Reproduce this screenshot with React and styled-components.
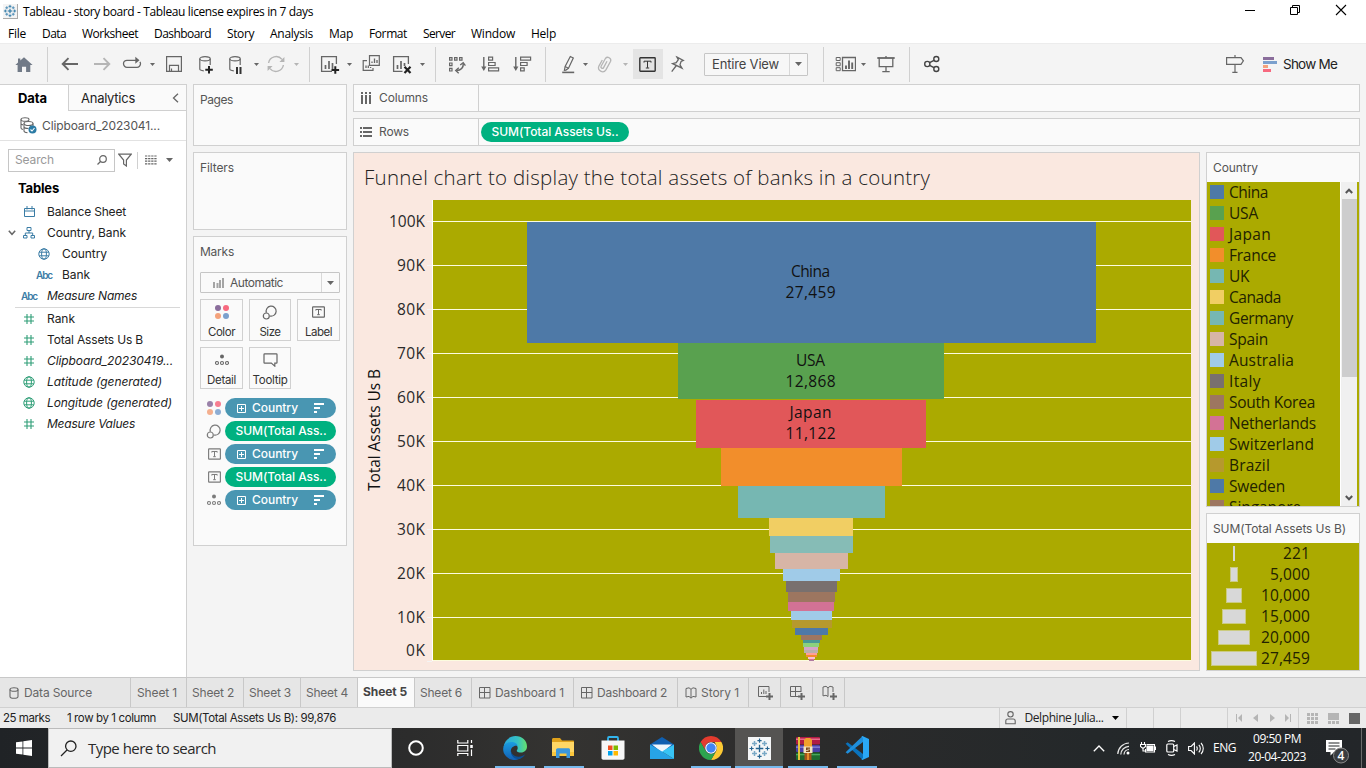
import React, { useLayoutEffect, useRef, useState } from "react";
import styled, { createGlobalStyle, css } from "styled-components";

const ui = `Inter, "Liberation Sans", sans-serif`;
const sys = `"Open Sans", "Noto Sans", sans-serif`;

const Global = createGlobalStyle`
  *, *::before, *::after { box-sizing: border-box; }
  html, body { margin: 0; padding: 0; }
  body { width: 1366px; height: 768px; overflow: hidden; background: #f4f4f4; font-family: ${ui}; font-size: 12px; color: #333; }
  svg { display: block; flex: none; }
`;

/* ---------- text ---------- */
const Text = styled.span`
  display: inline-block;
  flex: none;
  white-space: nowrap;
  font-family: ${(p) => (p.$sys ? sys : ui)};
  font-size: ${(p) => p.$size || 12}px;
  font-weight: ${(p) => p.$weight || 400};
  font-style: ${(p) => (p.$italic ? "italic" : "normal")};
  color: ${(p) => p.$color || "inherit"};
  line-height: ${(p) => p.$lh || 16}px;
`;

/* A label whose tracking is adjusted so that it takes the given width. */
function Label({ w, children, ...rest }) {
  const ref = useRef(null);
  const [tracking, setTracking] = useState(0);
  useLayoutEffect(() => {
    const range = document.createRange();
    range.selectNodeContents(ref.current);
    const natural = range.getBoundingClientRect().width;
    setTracking((w - natural) / String(children).length);
  }, [w, children]);
  return (
    <Text ref={ref} style={{ letterSpacing: `${tracking}px` }} {...rest}>
      {children}
    </Text>
  );
}

/* ---------- icons ---------- */
const Svg = ({ w = 20, h = 20, s = "#666", sw = 1, f = "none", children }) => (
  <svg width={w} height={h} viewBox={`0 0 ${w} ${h}`} fill={f} stroke={s} strokeWidth={sw}>{children}</svg>
);

const Caret = ({ c = "#666", w = 5, h = 3 }) => (
  <svg width={w} height={h} viewBox={`0 0 ${w} ${h}`}><path d={`M0 0H${w}L${w / 2} ${h}Z`} fill={c} /></svg>
);

const TableauMark = ({ size, c = "#1f6f9f", soft = "#4f8fb8" }) => (
  <svg width={size} height={size} viewBox="0 0 24 24" stroke={c} fill="none">
    <path d="M12 8v8M8 12h8" strokeWidth="1.8" />
    <path d="M12 1.5v5M9.5 4h5M12 17.5v5M9.5 20h5M1.5 12h5M4 9.5v5M17.5 12h5M20 9.5v5" strokeWidth="1.4" />
    <path stroke={soft} d="M6.5 4v5M4 6.5h5M17.5 4v5M15 6.5h5M6.5 15v5M4 17.5h5M17.5 15v5M15 17.5h5" strokeWidth="1.7" />
  </svg>
);

const Home = () => (
  <Svg s="none"><path fill="#717a87" d="M10 3.3 18.6 11h-2.3v7h-4.2v-5.2H8V18H3.6v-7H1.4L4 8.6V4.4h2.3v2.2z" /></Svg>
);
const Arrow = ({ c, flip }) => (
  <Svg s={c} sw="1.9"><path d={flip ? "M2 10h15M11.5 4.2 17.3 10l-5.8 5.8" : "M18 10H3M8.5 4.2 2.7 10l5.8 5.8"} /></Svg>
);
const Redo = () => (
  <Svg sw="1.3"><path d="M14 6.3H5a3.5 3.5 0 0 0 0 7h10a3.5 3.5 0 0 0 3.5-3.5c0-.9-.2-1.500-.6-2" /><path fill="#666" stroke="none" d="M13.300 2.800 17.500 6.300l-4.200 3.500z" /></Svg>
);
const Save = () => (
  <Svg sw="1.2"><path d="M2.600 2.600h14.800v14.800H2.600zM5.500 17.400v-6h9v6M7.500 17.400v-3" /></Svg>
);
const Cylinder = ({ children }) => (
  <Svg sw="1.2"><ellipse cx="9" cy="4.700" rx="5.200" ry="2.100" /><path d="M3.800 4.700v10.400c0 .8 1.500 1.600 4 1.800M14.200 4.700V11" />{children}</Svg>
);
const DbPlus = () => <Cylinder><path stroke="#222" strokeWidth="2" d="M13 12v7.500M9.300 15.800h7.500" /></Cylinder>;
const DbPause = () => <Cylinder><path stroke="#333" strokeWidth="2" d="M11 13v7M14.500 13v7" /></Cylinder>;
const Refresh = () => (
  <Svg s="#b5b5b5" sw="1.4"><path d="M2.600 9A7.600 7.600 0 0 1 16 5.400M17.400 11A7.600 7.600 0 0 1 4 14.600" /><path fill="#b5b5b5" stroke="none" d="M18.400 3v5h-5zM1.600 17v-5h5z" /></Svg>
);
const NewSheet = () => (
  <Svg sw="1.3"><path d="M12 17.400H1.600V2.600h14.800V10" /><path strokeWidth="1.700" d="M5.500 11v4M9 7v8M12.500 9v6" /><path stroke="#222" strokeWidth="2" d="M15.300 12.300v7.400M11.500 16h7.600" /></Svg>
);
const Duplicate = () => (
  <Svg sw="1.2"><path d="M8.500 1.600h9.800v9.800H8.500zM6 6.600H2.200v9.800H12V14" /><path strokeWidth="1.300" d="M11 9V7.500M13.500 9V4.500M16 9V6M5 14v-2.500M7.300 14v-2.500M9.600 14v-1" /></Svg>
);
const ClearSheet = () => (
  <Svg sw="1.3"><path d="M10.500 17.400H1.600V2.600h14.800V10" /><path strokeWidth="1.700" d="M5.500 11v4M9 7v8M12.500 9v3" /><path stroke="#222" strokeWidth="2.200" d="m12.500 12.800 6 6.200M18.500 12.800l-6 6.200" /></Svg>
);
const Swap = () => (
  <Svg sw="1.2"><path d="M2.600 3.600H5v2.600H2.600zM7.600 3.600H10v2.600H7.600zM12.600 3.600H15v2.600h-2.400zM2.600 9H5v2.600H2.600zM2.600 14.400H5V17H2.600z" /><path strokeWidth="1.500" d="M16.300 9.500c.2 4-2.300 6.800-6.800 7" /><path strokeWidth="1.300" d="m13.200 11 3-2.300 2.200 3M11.800 13.800 8.700 16.600l3 2.600" /></Svg>
);
const Sort = ({ desc }) => (
  <Svg sw="1.2"><path strokeWidth="1.400" d="M3.800 3v12" /><path fill="#666" stroke="none" d="M1.200 12.600h5.200L3.800 17z" />
    <path d={desc ? "M8.600 3.100h10v3h-10zM8.600 8.500h6.500v3H8.600zM8.600 13.800h3.600v3H8.600z" : "M8.600 3.100h4v3h-4zM8.600 8.500h6.500v3H8.600zM8.600 13.800h10v3h-10z"} />
  </Svg>
);
const Highlighter = () => (
  <Svg sw="1.2"><path d="m12.300 2.500 3 1.500-4.800 10.300-3.400-1.700zM7.100 12.600l-.7 3.700 1.500-.2 2.600-1.800" /><path strokeWidth="1.600" d="M4.200 18.400h12" /></Svg>
);
const Clip = () => (
  <Svg s="#b5b5b5" sw="1.3"><path d="M12 7.300 8.600 13.600a1.400 1.400 0 0 1-2.500-1.400L10.400 4.500a3 3 0 0 1 5.200 2.800l-4.700 8.600a4 4 0 0 1-7-3.800L7.300 6" /></Svg>
);
const BoxT = ({ w = 17, h = 15, s = "#666", sw = 1.4, fs = 1 }) => (
  <svg width={w} height={h} viewBox="0 0 17 15" fill="none" stroke={s} strokeWidth={sw}>
    <rect x=".8" y=".8" width="15.400" height="13.400" rx=".6" /><path strokeWidth={fs} d="M5 5.600V4.200h7v1.400M8.500 4.200v6.600M6.800 11h3.400" />
  </svg>
);
const Pin = () => (
  <Svg sw="1.3"><path d="m10 3.200 6.300 3.200-2.200 1L13 10.800l2 3.400-9.400-4.600 3.600-1L11.300 5.600zM9 12l-4.300 5.600" /></Svg>
);
const Cards = () => (
  <Svg w={21} sw="1.3"><path strokeWidth="1" d="M1.200 3.500h4v3h-4zM1.200 8.700h4v3h-4zM1.200 13.700h4v3h-4z" /><path d="M7.500 3.500h13v13.200h-13z" /><path strokeWidth="1.900" d="M11 11.500V15M14 6.500V15M17.200 8.500V15" /></Svg>
);
const Presentation = () => (
  <Svg sw="1.3"><path strokeWidth="1.800" d="M1.300 4h17.400" /><path d="M3.200 4v8.600h13.600V4M10 2v2M10 12.600v5M6.300 17.700h7.400" /></Svg>
);
const Share = () => (
  <Svg s="#444" sw="1.4"><circle cx="5.300" cy="10" r="2.600" /><circle cx="14.300" cy="5" r="2.500" /><circle cx="14.300" cy="15" r="2.500" /><path d="m7.600 8.700 4.400-2.400M7.600 11.300l4.400 2.400" /></Svg>
);
const Signpost = () => (
  <Svg sw="1.2"><path d="M1.600 3.600H16l2.400 3.200L16 10.400H1.600zM10 1v2.600M10 10.400v8M7.300 18.300h5.200" /></Svg>
);
const ShowMeIcon = () => (
  <svg width="14" height="16"><path fill="#8a6d9b" d="M0 1h11v3H0z" /><path fill="#7ba0cd" d="M0 5h14v3H0z" /><path fill="#f4a27c" d="M0 9h5v3H0z" /><path fill="#f7697f" d="M0 13h8v3H0z" /></svg>
);

const ColorDots = () => (
  <svg width="14" height="14"><circle cx="3" cy="3" r="3" fill="#8a6d9b" /><circle cx="11" cy="3" r="3" fill="#f7697f" /><circle cx="3" cy="11" r="3" fill="#f4a27c" /><circle cx="11" cy="11" r="3" fill="#7ba0cd" /></svg>
);
const SizeIcon = () => (
  <Svg w={16} h={15} sw="1.2"><path d="M4.400 7.700A5 5 0 1 1 8 11" /><circle cx="4.300" cy="11" r="3" /></Svg>
);
const DetailIcon = () => (
  <Svg w={14} h={12} sw="1.1"><circle cx="7" cy="2.500" r="2" fill="#666" stroke="none" /><circle cx="2" cy="9" r="1.500" /><circle cx="7" cy="9" r="1.500" /><circle cx="12" cy="9" r="1.500" /></Svg>
);
const TooltipIcon = () => (
  <Svg w={15} h={14} sw="1.2"><path d="M1.600.9h11.800c.4 0 .6.2.6.6v8c0 .4-.2.6-.6.6h-1.600v3L8.300 10.100H1.600C1.200 10.100 1 9.900 1 9.500v-8c0-.4.2-.6.6-.6z" /></Svg>
);
const Plus = () => (
  <Svg w={9} h={9} s="#fff"><path d="M.5.5h8v8h-8zM4.500 2v5M2 4.500h5" /></Svg>
);
const SortPill = () => (
  <svg width="10" height="10"><path fill="#fff" d="M0 0h10v2H0zM0 4h6v2H0zM0 8h3v2H0z" /></svg>
);
const Calendar = () => <Svg w={11} h={11} s="#3a7ca5"><path d="M.5 2.500h10v8H.5zM.5 5h10M3 0v3.500M8 0v3.500" /></Svg>;
const Hierarchy = () => <Svg w={12} h={12} s="#3a7ca5"><path d="M4 .5h4v3H4zM.5 8.500h3.500v2.500H.5zM8 8.500h3.500v2.500H8zM6 3.500V6M2.300 8.500V6h7.400v2.500" /></Svg>;
const Globe = ({ c }) => (
  <Svg w={12} h={12} s={c}><circle cx="6" cy="6" r="5.200" /><ellipse cx="6" cy="6" rx="2.400" ry="5.200" /><path d="M1.200 4.200h9.600M1.200 7.800h9.600" /></Svg>
);
const Hash = () => <Svg w={10} h={10} s="#2f9e77" sw="1.100"><path d="M3 0v10M7 0v10M0 3h10M0 7h10" /></Svg>;

/* ---------- window chrome ---------- */
const Desktop = styled.div`
  width: 1366px;
  height: 768px;
  display: flex;
  flex-direction: column;
  overflow: hidden;
`;
const TitleBar = styled.header`
  height: 23px;
  flex: none;
  background: #fff;
  color: #000;
  display: flex;
  align-items: center;
  padding-left: 3px;
`;
const LogoTile = styled.div`
  width: 15px;
  height: 15px;
  margin-right: 5px;
  background: #f4f4f4;
  border-right: 1px solid #aaa;
  border-bottom: 1px solid #aaa;
`;
const WindowControls = styled.div`
  margin-left: auto;
  display: flex;
  align-items: center;
  gap: 35px;
  padding-right: 19px;
  height: 20px;
  align-self: flex-start;
`;
const MenuBar = styled.nav`
  height: 20px;
  flex: none;
  background: #fff;
  color: #000;
  display: flex;
  padding: 3px 0 0 8px;
`;
const Menu = styled.div`
  width: ${(p) => p.$w}px;
  flex: none;
`;
const Toolbar = styled.div`
  height: 41px;
  flex: none;
  display: flex;
  align-items: center;
  border-top: 1px solid #ececec;
`;
const Tool = styled.div`
  flex: none;
  margin-left: ${(p) => p.$ml || 0}px;
  color: #222;
  ${(p) => p.$active && css`
    width: 30px;
    height: 30px;
    background: #e4e4e4;
    display: flex;
    align-items: center;
    padding-left: 6px;
  `}
`;
const Divider = styled.i`
  flex: none;
  width: 1px;
  height: ${(p) => p.$h || 35}px;
  margin-left: ${(p) => p.$ml || 0}px;
  background: #d0d0d0;
`;
const Select = styled.div`
  display: flex;
  align-items: center;
  flex: none;
  width: ${(p) => p.$w}px;
  height: ${(p) => p.$h}px;
  margin-top: ${(p) => p.$mt || 0}px;
  margin-left: ${(p) => p.$ml || 0}px;
  border: 1px solid #c6c6c6;
  border-radius: 1px;
  background: ${(p) => p.$bg || "#f7f7f7"};
  padding-left: ${(p) => p.$pl}px;
`;
const SelectArrow = styled.div`
  margin-left: auto;
  width: 18px;
  height: 100%;
  border-left: 1px solid #d8d8d8;
  display: grid;
  place-items: center;
`;

/* ---------- workspace ---------- */
const Workspace = styled.main`
  height: 593px;
  flex: none;
  display: flex;
`;
const DataPane = styled.aside`
  width: 187px;
  flex: none;
  background: #fff;
  border-top: 1px solid #d0d0d0;
  border-right: 1px solid #d0d0d0;
  color: #222;
`;
const PaneTabs = styled.div`
  height: 26px;
  display: flex;
`;
const PaneTab = styled.div`
  display: flex;
  align-items: center;
  padding-left: ${(p) => p.$pl}px;
  ${(p) => p.$active
    ? css`width: 68px; color: #000;`
    : css`flex: 1; background: #fafafa; border-left: 1px solid #d0d0d0; border-bottom: 1px solid #d0d0d0; padding-right: 7px; justify-content: space-between;`}
`;
const SourceRow = styled.div`
  height: 30px;
  display: flex;
  align-items: center;
  gap: 5px;
  padding-left: 20px;
  border-bottom: 1px solid #e2e2e2;
  color: #555;
`;
const SearchRow = styled.div`
  display: flex;
  align-items: center;
  height: 24px;
  margin-top: 7px;
  padding-left: 8px;
`;
const SearchBox = styled.div`
  width: 107px;
  height: 23px;
  flex: none;
  display: flex;
  align-items: center;
  justify-content: space-between;
  border: 1px solid #c6c6c6;
  padding: 0 7px 0 6px;
  margin-right: 3px;
  color: #999;
`;
const Heading = styled.div`
  padding: 8px 0 5px 18px;
  color: #000;
`;
const Field = styled.div`
  height: 21px;
  display: flex;
  align-items: center;
  padding-left: ${(p) => (p.$nested ? 23 : 8)}px;
`;
const FieldToggle = styled.span`
  width: 8px;
  flex: none;
  margin-right: -8px;
`;
const FieldIcon = styled.span`
  width: 42px;
  height: 21px;
  margin-right: -3px;
  flex: none;
  display: grid;
  place-items: center;
  color: #3a7ca5;
`;
const FieldRule = styled.div`
  height: 1px;
  margin: 1px 6px 0 15px;
  background: #d8d8d8;
`;

const Shelves = styled.section`
  width: 154px;
  flex: none;
  margin-left: 6px;
  display: flex;
  flex-direction: column;
  gap: 6px;
`;
const Card = styled.div`
  flex: none;
  height: ${(p) => p.$h}px;
  background: #fafafa;
  border: 1px solid #d0d0d0;
  padding: 7px 6px 0;
  color: #555;
`;
const CardTitle = styled.div`
  height: 16px;
  display: flex;
`;
const MarkGrid = styled.div`
  display: grid;
  grid-template-columns: 43px 42px 43px;
  grid-auto-rows: 42px;
  gap: 6px;
  margin: 6px 0 9px;
`;
const MarkButton = styled.div`
  border: 1px solid #d0d0d0;
  background: #fafafa;
  display: flex;
  flex-direction: column;
  align-items: center;
  justify-content: space-between;
  color: #333;
`;
const MarkGlyph = styled.div`
  height: 26px;
  display: grid;
  place-items: center;
`;
const PillRow = styled.div`
  height: 20px;
  display: flex;
  align-items: center;
  margin-bottom: 3px;
`;
const PillIcon = styled.div`
  width: 25px;
  padding-left: 3px;
  display: grid;
  place-items: center;
  opacity: 0.85;
`;
const Pill = styled.div`
  width: ${(p) => p.$w || 111}px;
  height: 20px;
  border-radius: 10px;
  color: #fff;
  background: ${(p) => (p.$measure ? "#00b180" : "#4996b2")};
  display: flex;
  align-items: center;
  gap: 6px;
  padding: 0 12px 0 ${(p) => (p.$measure ? 10.5 : 12)}px;
  & > :nth-child(3) { margin-left: auto; }
`;

const Board = styled.section`
  width: 1007px;
  flex: none;
  margin-left: 6px;
  display: flex;
  flex-direction: column;
  gap: 6px;
`;
const Shelf = styled.div`
  height: 28px;
  flex: none;
  display: flex;
  border: 1px solid #d0d0d0;
  background: #fafafa;
  color: #555;
`;
const ShelfName = styled.div`
  width: 125px;
  border-right: 1px solid #d0d0d0;
  display: flex;
  align-items: center;
  gap: 7px;
  padding-left: 6px;
`;
const ShelfBody = styled.div`
  display: flex;
  align-items: center;
  padding-left: 2px;
`;
const Stage = styled.div`
  display: flex;
  gap: 6px;
  height: 519px;
`;
const Viz = styled.div`
  width: 847px;
  border: 1px solid #d0d0d0;
  background: #fae8e0;
`;
const Legends = styled.div`
  width: 154px;
  display: flex;
  flex-direction: column;
  gap: 6px;
`;
const Legend = styled.div`
  height: ${(p) => p.$h}px;
  flex: none;
  border: 1px solid #d0d0d0;
  background: #fafafa;
  color: #555;
  display: flex;
  flex-direction: column;
`;
const LegendTitle = styled.div`
  height: 29px;
  flex: none;
  padding: 7px 0 0 6px;
`;
const LegendBody = styled.div`
  flex: 1;
  min-height: 0;
  display: flex;
  background: #abaa00;
  color: #222200;
`;
const LegendList = styled.div`
  width: 133px;
  overflow: hidden;
`;
const LegendItem = styled.div`
  height: 21px;
  display: flex;
  align-items: flex-start;
  gap: 5px;
  padding-left: 3px;
`;
const Swatch = styled.i`
  width: 14px;
  height: 14px;
  margin-top: 3px;
  flex: none;
  background: ${(p) => p.$c};
`;
const Scrollbar = styled.div`
  width: 17px;
  background: #f0f0f0;
  border-left: 1px solid #fff;
  display: flex;
  flex-direction: column;
  align-items: center;
  justify-content: space-between;
`;
const ScrollStep = styled.div`
  width: 16px;
  height: 17px;
  flex: none;
  display: grid;
  place-items: center;
`;
const Thumb = styled.div`
  width: 15px;
  height: 178px;
  margin-bottom: auto;
  background: #cdcdcd;
`;
const SizeRow = styled.div`
  height: 21px;
  display: grid;
  grid-template-columns: 54px 49px;
  align-items: start;
  justify-items: center;
`;
const SizeBar = styled.i`
  height: 15px;
  margin-top: 3px;
  width: ${(p) => p.$w}px;
  background: #d8d8d8;
  border: ${(p) => (p.$w > 3 ? 1 : 0)}px solid #cbcb80;
`;
const RightText = styled.div`
  justify-self: end;
  height: 20px;
`;

/* ---------- bottom bars ---------- */
const SheetTabs = styled.div`
  height: 31px;
  flex: none;
  display: flex;
  background: #e6e6e6;
  border-top: 1px solid #c8c8c8;
  border-bottom: 1px solid #d0d0d0;
  color: #666;
`;
const SheetTab = styled.div`
  width: ${(p) => p.$w}px;
  flex: none;
  border-right: 1px solid #c8c8c8;
  display: flex;
  align-items: center;
  gap: ${(p) => p.$gap || 4}px;
  padding: 0 0 ${(p) => (p.$active ? 2 : 0)}px ${(p) => p.$pl}px;
  ${(p) => p.$active && css`background: #fafafa; color: #444;`}
`;
const StatusBar = styled.div`
  height: 20px;
  flex: none;
  display: flex;
  align-items: center;
  background: #ebebeb;
  color: #222;
  padding-left: 3px;
`;
const StatusCell = styled.div`
  width: ${(p) => p.$w}px;
  height: 20px;
  flex: none;
  border-left: 1px solid #d0d0d0;
  display: flex;
  align-items: center;
  justify-content: space-between;
  padding: 0 ${(p) => p.$pr || 0}px 0 ${(p) => p.$pl || 0}px;
`;
const StatusText = styled.div`
  width: ${(p) => p.$w}px;
`;
const Taskbar = styled.footer`
  height: 40px;
  flex: none;
  display: flex;
  background: linear-gradient(90deg, #202326 0, #2c2c2c 30%, #343331 41%, #2b2b2b 60%, #24282a 80%, #232629 100%);
  color: #fff;
`;
const StartButton = styled.div`
  width: 48px;
  display: grid;
  place-items: center;
`;
const TaskSearch = styled.div`
  width: 344px;
  border: 1px solid #bbb;
  background: #f1f1f1;
  color: #2a2a2a;
  display: flex;
  align-items: center;
  gap: 11px;
  padding-left: 11px;
`;
const TaskItem = styled.div`
  width: ${(p) => p.$w || 49}px;
  flex: none;
  display: flex;
  flex-direction: column;
  align-items: center;
  background: ${(p) => (p.$active ? "#555452" : "transparent")};
`;
const TaskIcon = styled.div`
  height: 38px;
  padding-top: 2px;
  display: grid;
  place-items: center;
`;
const Running = styled.i`
  width: ${(p) => p.$w || 40}px;
  height: 2px;
  background: #76b9ed;
`;
const Tray = styled.div`
  margin-left: auto;
  display: flex;
  align-items: center;
`;
const TraySlot = styled.div`
  width: ${(p) => p.$w}px;
  padding-top: ${(p) => p.$pt || 0}px;
  flex: none;
  display: grid;
  place-items: center;
`;
const Clock = styled.div`
  width: 70px;
  display: flex;
  flex-direction: column;
  align-items: center;
  gap: 2px;
`;
const ShowDesktop = styled.i`
  width: 5px;
  height: 40px;
  border-left: 1px solid #6a6a6a;
`;

/* ---------- data ---------- */
const menus = [["File", 18, 34], ["Data", 24, 40], ["Worksheet", 56, 72], ["Dashboard", 57, 73], ["Story", 27, 43], ["Analysis", 43, 59], ["Map", 24, 40], ["Format", 38, 54], ["Server", 32, 48], ["Window", 44, 60], ["Help", 25, 40]];

const bars = [
  [527, 1096, 222, 343, "#4e79a7"], [678, 944, 343, 399, "#59a14f"], [696, 926, 400, 448, "#e15759"],
  [721, 902, 448, 486, "#f28e2b"], [738, 885, 486, 518, "#76b7b2"], [769, 853, 518, 536, "#f1ce63"],
  [770, 853, 536, 553, "#86bcb6"], [775, 848, 553, 569, "#d7b5a6"], [783, 840, 569, 581, "#a0cbe8"],
  [786, 837, 581, 592, "#79706e"], [788, 835, 592, 602, "#9d7660"], [788, 834, 602, 611, "#d37295"],
  [791, 832, 611, 620, "#a0cbe8"], [792, 832, 620, 628, "#b6992d"], [795, 828, 628, 635, "#4e79a7"],
  [801, 822, 635, 640, "#9d7660"], [803, 820, 640, 643, "#499894"], [803, 819, 643, 647, "#8cd17d"],
  [804, 818, 647, 650, "#d4a6c8"], [804, 818, 650, 653, "#bab0ac"], [806, 817, 653, 655, "#ff9d9a"],
  [806, 817, 655, 657, "#f28e2b"], [808, 815, 657, 659, "#fabfd2"], [809, 814, 659, 660, "#d37295"],
  [809, 814, 660, 661, "#b07aa1"],
];
const axis = [["100K", 221, 36], ["90K", 265, 28], ["80K", 309, 28], ["70K", 353, 28], ["60K", 397, 28], ["50K", 441, 28], ["40K", 485, 28], ["30K", 529, 28], ["20K", 573, 28], ["10K", 617, 28], ["0K", 661, 19]];
const barLabels = [["China", 277, 39], ["27,459", 298, 50], ["USA", 366, 29], ["12,868", 387, 50], ["Japan", 418, 42], ["11,122", 439, 50]];

const countries = [
  ["China", "#4e79a7", 39], ["USA", "#59a14f", 29], ["Japan", "#e15759", 42], ["France", "#f28e2b", 47], ["UK", "#76b7b2", 20],
  ["Canada", "#f1ce63", 52], ["Germany", "#76b7b2", 64], ["Spain", "#d7b5a6", 39], ["Australia", "#a0cbe8", 65], ["Italy", "#79706e", 32],
  ["South Korea", "#9d7660", 86], ["Netherlands", "#d37295", 87], ["Switzerland", "#a0cbe8", 85], ["Brazil", "#b6992d", 41],
  ["Sweden", "#4e79a7", 56], ["Singapore", "#9d7660", 72],
];
const sizes = [["221", 2, 27], ["5,000", 8, 40], ["10,000", 16, 49], ["15,000", 24, 49], ["20,000", 32, 49], ["27,459", 46, 49]];

const Abc = () => <Label w={16} $size={10} $weight={600}>Abc</Label>;
const dims = [
  [<Calendar />, "Balance Sheet", 79], [<Hierarchy />, "Country, Bank", 79, { open: true }],
  [<Globe c="#3a7ca5" />, "Country", 45, { nested: true }], [<Abc />, "Bank", 28, { nested: true }],
  [<Abc />, "Measure Names", 90, { italic: true }],
];
const meas = [
  [<Hash />, "Rank", 28], [<Hash />, "Total Assets Us B", 96], [<Hash />, "Clipboard_20230419...", 126, { italic: true }],
  [<Globe c="#2f9e77" />, "Latitude (generated)", 115, { italic: true }], [<Globe c="#2f9e77" />, "Longitude (generated)", 125, { italic: true }],
  [<Hash />, "Measure Values", 88, { italic: true }],
];

const FieldRow = ({ icon, name, w, nested, italic, open }) => (
  <Field $nested={nested}>
    <FieldToggle>{open && <Svg w={8} h={6} sw="1.500"><path d="m.8.8 3.200 3.500L7.200.8" /></Svg>}</FieldToggle>
    <FieldIcon>{icon}</FieldIcon>
    <Label w={w} $italic={italic}>{name}</Label>
  </Field>
);

const marks = [
  ["Color", 27, <ColorDots />], ["Size", 21, <SizeIcon />], ["Label", 27, <BoxT w={13} h={12} sw={1.5} fs={1.3} />],
  ["Detail", 29, <DetailIcon />], ["Tooltip", 35, <TooltipIcon />],
];
const pills = [[<ColorDots />, 0], [<SizeIcon />, 1], [<BoxT w={13} h={12} sw={1.5} fs={1.3} />, 0], [<BoxT w={13} h={12} sw={1.5} fs={1.3} />, 1], [<DetailIcon />, 0]];

const Chart = () => (
  <svg width="845" height="517" viewBox="354 153 845 517" fontFamily={sys} fontSize="16" fill="#2a2a2a">
    <text x="364" y="185" fontSize="20.500" fontWeight="300" textLength="566" fill="#222">Funnel chart to display the total assets of banks in a country</text>
    <path d="M433 200H1191V661H433z" fill="#abaa00" />
    <path d="M432 200h1v461h-1z" fill="#fff" />
    {axis.map(([t, y, w]) => (
      <g key={t}>
        <rect x="433" y={y - (y === 661 ? 1 : 0)} width="758" height="1" fill="#fcfcdf" />
        <rect x="427" y={y} width="5" height="1" fill="#f4f4f4" />
        <text x={425 - w} y={y === 661 ? 656 : y + 6} textLength={w} fontSize="15.500">{t}</text>
      </g>
    ))}
    {bars.map(([x1, x2, y1, y2, c], i) => <rect key={i} x={x1} y={y1} width={x2 - x1} height={y2 - y1} fill={c} />)}
    {barLabels.map(([t, y, w]) => <text key={t} x={810.500 - w / 2} y={y} textLength={w} fill="#111" fontSize="15.500">{t}</text>)}
    <text transform="translate(380 491) rotate(-90)" textLength="122" fontSize="15.500" fill="#111">Total Assets Us B</text>
  </svg>
);

/* ---------- taskbar drawings ---------- */
const Edge = () => (
  <svg width="24" height="24" viewBox="0 0 24 24">
    <defs>
      <linearGradient id="ea" x1="0" x2="1"><stop offset="0" stopColor="#2aa7dd" /><stop offset=".6" stopColor="#35c1c4" /><stop offset="1" stopColor="#66e06c" /></linearGradient>
      <linearGradient id="eb" x1="0" y1="0" x2="0" y2="1"><stop offset="0" stopColor="#1b9de2" /><stop offset="1" stopColor="#1260b4" /></linearGradient>
    </defs>
    <path fill="url(#ea)" d="M.5 11C1.500 4.500 6.500 0 12.500 0 19 0 24 4.500 24 10.500c0 3.500-2.600 6-6 6-2.500 0-4.300-.8-4.300-1.800 0-.8 1-1 1-2.700C14.700 9 12 7 8.500 7 4.500 7 1.500 9 .5 11z" />
    <path fill="url(#eb)" d="M.2 12.500C.8 8 4.500 6 8.500 6c3.500 0 6 2 6 4-4-1-7.500 2.500-6.500 6.500.9 3.500 4.500 5.500 8 5.500 1 0 2-.2 2.500-.4C16.500 23.200 14.300 24 12 24 5.500 24-.3 19 .2 12.500z" />
    <path fill="#0b4f94" d="M8 14.500c.3 4 4 6.300 7.500 6.200 2.700 0 4.800-1.200 6.700-2.500-2 4-6 5.500-9 4.500C9.500 21.500 7.500 18 8 14.500z" />
  </svg>
);
const Explorer = () => (
  <svg width="23" height="20" viewBox="0 0 23 20"><path fill="#e0a21b" d="M0 1.500C0 .7.6 0 1.500 0H8l2 2.500h11c.6 0 1 .5 1 1V7H0z" /><path fill="#ffd765" d="M0 4h22v14H0z" /><path fill="#fbc63c" d="M0 14h22v4H0z" /><path fill="#3b97dc" d="M4 20v-8c0-1 .8-1.700 1.700-1.700h11C17.700 10.300 18 11 18 12v8h-3.500v-4.500h-7V20z" /></svg>
);
const Store = () => (
  <svg width="24" height="24" viewBox="0 0 24 24"><path d="M7 5V2.200C7 1.500 7.500 1 8 1h8c.6 0 1 .5 1 1.200V5" fill="none" stroke="#32b5ee" strokeWidth="1.800" /><path fill="#f7f7f7" d="M.5 4.500h23V22c0 1-.8 1.700-1.700 1.700H2.200C1.300 23.700.5 23 .5 22z" /><path fill="#f25022" d="M7 9.500h4.500V14H7z" /><path fill="#7fba00" d="M12.500 9.500H17V14h-4.500z" /><path fill="#00a4ef" d="M7 15h4.500v4.500H7z" /><path fill="#ffb900" d="M12.500 15H17v4.500h-4.500z" /></svg>
);
const Mail = () => (
  <svg width="24" height="22" viewBox="0 0 24 22"><path fill="#0f5fb0" d="M0 7.500 12 0l12 7.500V13H0z" /><path fill="#eef6fc" d="M2 7.500h20L12 15.500z" /><path fill="#27a3e6" d="M0 7.500V22h24L12 14.500z" /><path fill="#38c4f5" d="M24 7.500V22L12 14.500z" /></svg>
);
const Chrome = () => (
  <svg width="24" height="24" viewBox="0 0 24 24"><path fill="#e33b2e" d="M12 0a12 12 0 0 1 10.400 6H12a6 6 0 0 0-5.200 9L1.600 6A12 12 0 0 1 12 0z" /><path fill="#fcc934" d="M22.400 6A12 12 0 0 1 12 24l5.200-9A6 6 0 0 0 17.200 9L15.500 6z" /><path fill="#2da44f" d="M1.600 6a12 12 0 0 0 10.400 18l5.200-9A6 6 0 0 1 6.800 15z" /><circle cx="12" cy="12" r="5.800" fill="#fff" /><circle cx="12" cy="12" r="4.700" fill="#4285f4" /></svg>
);
const TableauTile = () => (
  <svg width="23" height="23" viewBox="0 0 23 23"><path fill="#f4f6f7" d="M0 0h23v23H0z" /><g transform="translate(1.500 1.500) scale(.835)" stroke="#24638f" fill="none"><path d="M12 7.500v9M7.500 12h9" strokeWidth="1.600" /><path d="M12 0v5M9.500 2.500h5M12 19v5M9.500 21.500h5M0 12h5M2.500 9.500v5M19 12h5M21.500 9.500v5" strokeWidth="1.400" /><path stroke="#79a9c6" d="M6 3v6M3 6h6M18 3v6M15 6h6M6 15v6M3 18h6M18 15v6M15 18h6" strokeWidth="1.800" /></g></svg>
);
const Winrar = () => (
  <svg width="24" height="23" viewBox="0 0 24 23"><rect y="0" width="24" height="7.500" rx="1" fill="#b01c44" /><rect y="8" width="24" height="7" rx="1" fill="#4a3fa8" /><rect y="15.500" width="24" height="7.500" rx="1" fill="#1e6b30" /><path fill="#e86c8c" d="M0 1.500h24v1.500H0z" /><path fill="#8b86d8" d="M0 9.500h24v1.300H0z" /><path fill="#49a85b" d="M0 17h24v1.300H0z" /><path fill="#e5c13d" d="M2 0h2v23H2z" /><path fill="#f0a02b" d="M8 3 10 1h4l2 2v7H8z" /><path fill="#a5541b" d="M8.500 16h7v7h-7z" /><path fill="#f2e4c0" d="M7.500 9.500h9V16h-9z" /><path fill="#7d4616" d="M10 10.500h4v1.200h-2.500v.8H14V15h-4v-1.200h2.500V13H10z" /><path fill="#e38b2a" d="M11 16h2v7h-2z" /></svg>
);
const VSCode = () => (
  <svg width="24" height="24" viewBox="0 0 24 24"><path fill="#0a73bd" d="M.6 7.800 2.600 6.200 18 18v5.600L16.600 23z" /><path fill="#1f8fdc" d="M.6 16.200 2.600 17.800 18 6V.4L16.600 1z" /><path fill="#2aa8f6" d="M17.400 0 24 3v18l-6.600 3-1-.8L18 22V2l-1.600-1.200z" /></svg>
);

/* ---------- page ---------- */
export default function App() {
  return (
    <>
      <Global />
      <Desktop>
        <TitleBar>
          <LogoTile><TableauMark size={14} /></LogoTile>
          <Label w={290} $sys>Tableau - story board - Tableau license expires in 7 days</Label>
          <WindowControls>
            <Svg w={10} h={10} s="#000"><path d="M0 5.500h10" /></Svg>
            <Svg w={10} h={10} s="#000"><path d="M.5 2.500h7v7h-7zM2.500 2.500v-2h7v7h-2" /></Svg>
            <Svg w={12} h={12} s="#000" sw="1.100"><path d="m1 1 10 10M11 1 1 11" /></Svg>
          </WindowControls>
        </TitleBar>
        <MenuBar>{menus.map(([t, w, slot]) => <Menu key={t} $w={slot}><Label w={w} $sys>{t}</Label></Menu>)}</MenuBar>

        <Toolbar>
          <Tool $ml={14}><Home /></Tool>
          <Divider $ml={13} />
          <Tool $ml={12}><Arrow c="#666" /></Tool>
          <Tool $ml={12}><Arrow c="#b5b5b5" flip /></Tool>
          <Tool $ml={10}><Redo /></Tool>
          <Tool $ml={8}><Caret /></Tool>
          <Tool $ml={9}><Save /></Tool>
          <Tool $ml={12}><DbPlus /></Tool>
          <Tool $ml={10}><DbPause /></Tool>
          <Tool $ml={8}><Caret /></Tool>
          <Tool $ml={7}><Refresh /></Tool>
          <Tool $ml={8}><Caret c="#b5b5b5" /></Tool>
          <Divider $ml={10} />
          <Tool $ml={10}><NewSheet /></Tool>
          <Tool $ml={7}><Caret /></Tool>
          <Tool $ml={9}><Duplicate /></Tool>
          <Tool $ml={11}><ClearSheet /></Tool>
          <Tool $ml={8}><Caret /></Tool>
          <Divider $ml={10} />
          <Tool $ml={11}><Swap /></Tool>
          <Tool $ml={13}><Sort /></Tool>
          <Tool $ml={12}><Sort desc /></Tool>
          <Divider $ml={13} />
          <Tool $ml={12}><Highlighter /></Tool>
          <Tool $ml={5}><Caret /></Tool>
          <Tool $ml={7}><Clip /></Tool>
          <Tool $ml={8}><Caret c="#b5b5b5" /></Tool>
          <Tool $ml={5} $active><BoxT s="#333" /></Tool>
          <Tool $ml={4}><Pin /></Tool>
          <Select $w={104} $h={23} $ml={17} $pl={7}>
            <Label w={67} $size={13} $color="#444">Entire View</Label>
            <SelectArrow><Caret w={7} h={4} /></SelectArrow>
          </Select>
          <Divider $ml={15} />
          <Tool $ml={11}><Cards /></Tool>
          <Tool $ml={5}><Caret /></Tool>
          <Tool $ml={10}><Presentation /></Tool>
          <Divider $ml={13} />
          <Tool $ml={12}><Share /></Tool>
          <Tool $ml={283}><Signpost /></Tool>
          <Tool $ml={18}><ShowMeIcon /></Tool>
          <Tool $ml={6}><Label w={54} $size={13.5}>Show Me</Label></Tool>
        </Toolbar>

        <Workspace>
          <DataPane>
            <PaneTabs>
              <PaneTab $active $pl={18}><Label w={29} $size={13} $weight={700}>Data</Label></PaneTab>
              <PaneTab $pl={12}>
                <Label w={54} $size={13}>Analytics</Label>
                <Svg w={7} h={10} sw="1.300"><path d="M6 .8 1.500 5 6 9.200" /></Svg>
              </PaneTab>
            </PaneTabs>
            <SourceRow>
              <Svg w={17} h={17} sw="1.100">
                <ellipse cx="5" cy="2.500" rx="4" ry="1.800" /><path d="M1 2.500V11c0 .8 1 1.300 2 1.500M1 6.500c0 .7 1 1.200 2 1.400" />
                <ellipse cx="8.500" cy="6.500" rx="4.500" ry="2" /><path d="M4 6.500V14c0 .9 1.500 1.500 3.500 1.800M4 10c.3 1 2 1.500 4.500 1.500M13 6.500V9" />
                <circle cx="12.500" cy="12.500" r="4" fill="#2b7ba5" stroke="none" /><path stroke="#fff" d="m10.500 12.500 1.500 1.500 2.500-3" />
              </Svg>
              <Label w={118}>Clipboard_2023041...</Label>
            </SourceRow>
            <SearchRow>
              <SearchBox>
                <Label w={39}>Search</Label>
                <Svg w={10} h={10} sw="1.200"><circle cx="6" cy="4" r="3.300" /><path d="M3.500 6.500.5 9.500" /></Svg>
              </SearchBox>
              <Svg w={14} h={14} sw="1.200"><path d="M.8 1.200h12.400L8.400 7v6L5.600 11V7z" /></Svg>
              <Divider $h={17} $ml={5} />
              <Tool $ml={7}><Svg w={12} h={10} sw="1.200"><path strokeDasharray="2.300 .8" d="M0 1h12M0 3.600h12M0 6.200h12M0 8.800h12" /></Svg></Tool>
              <Tool $ml={9}><Caret w={7} h={4} /></Tool>
            </SearchRow>
            <Heading><Label w={41} $size={13} $weight={700}>Tables</Label></Heading>
            {dims.map(([icon, name, w, o]) => <FieldRow key={name} icon={icon} name={name} w={w} {...o} />)}
            <FieldRule />
            {meas.map(([icon, name, w, o]) => <FieldRow key={name} icon={icon} name={name} w={w} {...o} />)}
          </DataPane>

          <Shelves>
            <Card $h={62}><CardTitle><Label w={33}>Pages</Label></CardTitle></Card>
            <Card $h={78}><CardTitle><Label w={34}>Filters</Label></CardTitle></Card>
            <Card $h={310}>
              <CardTitle><Label w={34}>Marks</Label></CardTitle>
              <Select $w={140} $h={21} $pl={12} $mt={12} $bg="#fafafa">
                <svg width="11" height="10" fill="#a5a5a5"><path d="M0 4h2v6H0zM3.500 5h2v5h-2zM6 2h2v8H6zM9 0h2v10H9z" /></svg>
                <Tool $ml={6}><Label w={53} $color="#555">Automatic</Label></Tool>
                <SelectArrow><Caret w={7} h={4} /></SelectArrow>
              </Select>
              <MarkGrid>
                {marks.map(([t, w, icon]) => (
                  <MarkButton key={t}><MarkGlyph>{icon}</MarkGlyph><Label w={w} $size={11.5}>{t}</Label></MarkButton>
                ))}
              </MarkGrid>
              {pills.map(([icon, measure], i) => (
                <PillRow key={i}>
                  <PillIcon>{icon}</PillIcon>
                  {measure
                    ? <Pill $measure><Label w={91} $weight={500}>SUM(Total Ass..</Label></Pill>
                    : <Pill><Plus /><Label w={46} $weight={500}>Country</Label><SortPill /></Pill>}
                </PillRow>
              ))}
            </Card>
          </Shelves>

          <Board>
            <Shelf>
              <ShelfName>
                <svg width="12" height="12" fill="#666"><path d="M1 0h2v2H1zM5 0h2v2H5zM9 0h2v2H9zM1 3h2v9H1zM5 3h2v9H5zM9 3h2v9H9z" /></svg>
                <Label w={49}>Columns</Label>
              </ShelfName>
            </Shelf>
            <Shelf>
              <ShelfName>
                <svg width="12" height="11" fill="#666"><path d="M0 0h2v2H0zM0 4h2v2H0zM0 8h2v2H0zM3 0h9v2H3zM3 4h9v2H3zM3 8h9v2H3z" /></svg>
                <Label w={30}>Rows</Label>
              </ShelfName>
              <ShelfBody><Pill $measure $w={148}><Label w={127} $weight={500}>SUM(Total Assets Us..</Label></Pill></ShelfBody>
            </Shelf>
            <Stage>
              <Viz><Chart /></Viz>
              <Legends>
                <Legend $h={355}>
                  <LegendTitle><Label w={45}>Country</Label></LegendTitle>
                  <LegendBody>
                    <LegendList>
                      {countries.map(([t, c, w]) => (
                        <LegendItem key={t}><Swatch $c={c} /><Label w={w} $sys $size={15.5} $lh={20}>{t}</Label></LegendItem>
                      ))}
                    </LegendList>
                    <Scrollbar>
                      <ScrollStep><Svg w={8} h={6} s="#555" sw="2"><path d="M.8 5 4 1.700 7.200 5" /></Svg></ScrollStep>
                      <Thumb />
                      <ScrollStep><Svg w={8} h={6} s="#555" sw="2"><path d="M.8 1 4 4.300 7.200 1" /></Svg></ScrollStep>
                    </Scrollbar>
                  </LegendBody>
                </Legend>
                <Legend $h={158}>
                  <LegendTitle><Label w={133}>SUM(Total Assets Us B)</Label></LegendTitle>
                  <LegendBody>
                    <div>
                      {sizes.map(([t, bw, w]) => (
                        <SizeRow key={t}><SizeBar $w={bw} /><RightText><Label w={w} $sys $size={15.5} $lh={20}>{t}</Label></RightText></SizeRow>
                      ))}
                    </div>
                  </LegendBody>
                </Legend>
              </Legends>
            </Stage>
          </Board>
        </Workspace>

        <SheetTabs>
          <SheetTab $w={131} $pl={9} $gap={5}>
            <Svg w={10} h={12} sw="1.100"><ellipse cx="5" cy="2.500" rx="4" ry="1.800" /><path d="M1 2.500v7c0 1 1.500 1.800 4 1.800s4-.8 4-1.800v-7" /></Svg>
            <Label w={68}>Data Source</Label>
          </SheetTab>
          <SheetTab $w={56} $pl={6}><Label w={40}>Sheet 1</Label></SheetTab>
          <SheetTab $w={57} $pl={5}><Label w={42}>Sheet 2</Label></SheetTab>
          <SheetTab $w={57} $pl={5}><Label w={42}>Sheet 3</Label></SheetTab>
          <SheetTab $w={57} $pl={5}><Label w={42}>Sheet 4</Label></SheetTab>
          <SheetTab $w={57} $pl={5} $active><Label w={44} $weight={700}>Sheet 5</Label></SheetTab>
          <SheetTab $w={57} $pl={5}><Label w={42}>Sheet 6</Label></SheetTab>
          {[["Dashboard 1", 102, 69], ["Dashboard 2", 104, 70]].map(([t, w, tw]) => (
            <SheetTab key={t} $w={w} $pl={7}><Svg w={12} h={12}><path d="M.5.5h10.500v10.500H.5zM5.500.5v10.500M.5 5.500h10.500" /></Svg><Label w={tw}>{t}</Label></SheetTab>
          ))}
          <SheetTab $w={71} $pl={7}><Svg w={12} h={12}><path d="M1 1.500 4 .8l2 1.500L8 .8l3 .7v8.500l-3-.6-2 1.800-2-1.800-3 .6zM6 2.300v8.500" /></Svg><Label w={38}>Story 1</Label></SheetTab>
          <SheetTab $w={32} $pl={9}><Svg w={16} h={15}><path d="M8 11.500H.5V1.500h10.500V7M3.500 9V7M5.800 9V4.500M8 9V6" /><path strokeWidth="2" d="M11.500 8v7M8 11.500h7" /></Svg></SheetTab>
          <SheetTab $w={32} $pl={9}><Svg w={16} h={15}><path d="M8 11.500H.5V1.500h10.500V7M5.500 1.500v10M.5 6.500h10.500" /><path strokeWidth="2" d="M11.500 8v7M8 11.500h7" /></Svg></SheetTab>
          <SheetTab $w={32} $pl={9}><Svg w={16} h={15}><path d="M6 11.500 4 10.300l-3 .6V2l3-.7 2 1.500 2-1.500 3 .7v5M6 3v8.500" /><path strokeWidth="2" d="M11.500 8v7M8 11.500h7" /></Svg></SheetTab>
        </SheetTabs>

        <StatusBar>
          <StatusText $w={64}><Label w={47} $size={11.5}>25 marks</Label></StatusText>
          <StatusText $w={106}><Label w={89} $size={11.5}>1 row by 1 column</Label></StatusText>
          <StatusText $w={826}><Label w={163} $size={11.5}>SUM(Total Assets Us B): 99,876</Label></StatusText>
          <StatusCell $w={127} $pl={5} $pr={7}>
            <Svg w={11} h={14} sw="1.100"><circle cx="5.500" cy="3.300" r="2.700" /><path d="M.8 12.800V10c0-1.200 1-2 2-2h5.400c1 0 2 .8 2 2v2.800z" /></Svg>
            <Label w={79} $sys $size={12}>Delphine Julia...</Label>
            <Caret c="#000" w={7} h={4} />
          </StatusCell>
          <StatusCell $w={27} /><StatusCell $w={27} /><StatusCell $w={47} />
          <StatusCell $w={71} $pl={8} $pr={7}>
            {["M0 0h1v8H0zM6 0v8L2 4z", "M6 0v8L1 4z", "M1 0v8l5-4z", "M0 0v8l4-4zM5 0h1v8H5z"].map((d) => <svg key={d} width="6" height="8" fill="#b5b5b5"><path d={d} /></svg>)}
          </StatusCell>
          <StatusCell $w={68} $pl={8} $pr={6}>
            <svg width="11" height="11" fill="#b5b5b5"><path d="M0 0h3v3H0zM4 0h3v3H4zM8 0h3v3H8zM0 4h3v3H0zM4 4h3v3H4zM8 4h3v3H8zM0 8h3v3H0zM4 8h3v3H4zM8 8h3v3H8z" /></svg>
            <svg width="11" height="11" fill="#b5b5b5"><path d="M0 0h11v7H0zM0 8h3v3H0zM4 8h3v3H4zM8 8h3v3H8z" /></svg>
            <svg width="11" height="11" fill="#666"><path d="M0 0h11v11H0z" /></svg>
          </StatusCell>
        </StatusBar>

        <Taskbar>
          <StartButton><svg width="16" height="16" fill="#fff"><path d="m0 2.300 6.500-.9v6.200H0zM7.300 1.300 16 0v7.600H7.300zM0 8.400h6.500v6.200L0 13.700zM7.300 8.400H16V16l-8.700-1.300z" /></svg></StartButton>
          <TaskSearch>
            <Svg w={17} h={17} s="#222" sw="1.300"><circle cx="10.800" cy="6.200" r="5.200" /><path d="M7 10 1 16" /></Svg>
            <Label w={128} $sys $size={15} $lh={20}>Type here to search</Label>
          </TaskSearch>
          <TaskItem $w={48}><TaskIcon><Svg w={16} h={16} s="#fff" sw="2"><circle cx="8" cy="8" r="6.800" /></Svg></TaskIcon></TaskItem>
          <TaskItem $w={50}><TaskIcon><Svg w={17} h={16} s="#fff" sw="1.200"><path d="M.8 0v3h10V0M.8 16v-2.500h10V16M.8 5.500h10v5.500H.8zM14.500 0v3M14.500 9.500V16" /><path strokeWidth="2.500" d="M14.500 5v3" /></Svg></TaskIcon></TaskItem>
          <TaskItem><TaskIcon><Edge /></TaskIcon><Running /></TaskItem>
          <TaskItem><TaskIcon><Explorer /></TaskIcon><Running /></TaskItem>
          <TaskItem><TaskIcon><Store /></TaskIcon></TaskItem>
          <TaskItem><TaskIcon><Mail /></TaskIcon></TaskItem>
          <TaskItem><TaskIcon><Chrome /></TaskIcon><Running /></TaskItem>
          <TaskItem $active $w={48}><TaskIcon><TableauTile /></TaskIcon><Running $w={48} /></TaskItem>
          <TaskItem $w={50}><TaskIcon><Winrar /></TaskIcon><Running /></TaskItem>
          <TaskItem $w={48}><TaskIcon><VSCode /></TaskIcon><Running /></TaskItem>
          <Tray>
            <TraySlot $w={24}><Svg w={12} h={7} s="#fff" sw="1.300"><path d="M.8 6.200 6 1l5.200 5.200" /></Svg></TraySlot>
            <TraySlot $w={25}><Svg w={13} h={13} s="#e8e8e8" sw="1.200"><path d="M.8 12A11.500 11.500 0 0 1 12 1M3.800 12.500A8.500 8.500 0 0 1 12 4.300M7 12.500a5.300 5.300 0 0 1 5-5" /><circle cx="11" cy="11" r="1.500" fill="#fff" stroke="none" /></Svg></TraySlot>
            <TraySlot $w={23}><Svg w={16} h={12} s="#fff" sw="1.100"><path d="M6.500 2.500h8v7.500H5.500V7M15.500 4.500v3.500M1.500 0v2M4.500 0v2M.5 2.500h5v2L3 6.500.5 4.500zM3 6.500V9h2" /><path fill="#fff" d="M7 4h6v4.500H7z" /></Svg></TraySlot>
            <TraySlot $w={25}><Svg w={12} h={16} s="#fff" sw="1.200"><rect x=".8" y="4" width="6.900" height="8" rx="1" /><path d="M7.700 6.500 11 5v6l-3.300-1.500M2 1.500C4 .5 7 .5 9 1.500M2 14.500c2 1 5 1 7 0" /></Svg></TraySlot>
            <TraySlot $w={23}><Svg w={16} h={13} s="#fff" sw="1.100"><path d="M.6 4.500h2.500L6.400 1v11L3.100 8.500H.6zM8.500 4.500c1 1 1 3 0 4M10.800 2.800c2 2 2 5.500 0 7.500M13 1c3 3 3 8 0 11" /></Svg></TraySlot>
            <TraySlot $w={35}><Label w={23} $sys $size={12}>ENG</Label></TraySlot>
            <Clock><Label w={48} $sys $size={12}>09:50 PM</Label><Label w={58} $sys $size={12}>20-04-2023</Label></Clock>
            <TraySlot $w={49} $pt={6}>
              <svg width="26" height="26" viewBox="0 0 26 26">
                <path fill="#fff" d="M2 2h16v12H10l-3.500 3.500V14H2z" /><path stroke="#232629" strokeWidth="1.200" d="M4.500 5h11M4.500 8h11M4.500 11h7" />
                <circle cx="17" cy="17.500" r="7.500" fill="#3a3d40" stroke="#8a8a8a" />
                <text x="17" y="21.800" textAnchor="middle" fill="#fff" fontFamily={sys} fontSize="12" fontWeight="600">4</text>
              </svg>
            </TraySlot>
            <ShowDesktop />
          </Tray>
        </Taskbar>
      </Desktop>
    </>
  );
}
